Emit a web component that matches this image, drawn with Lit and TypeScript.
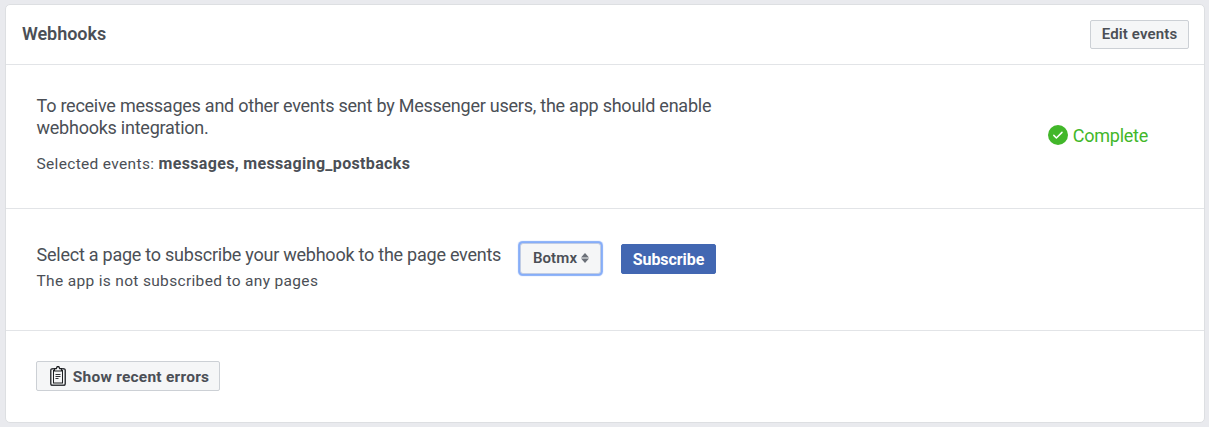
import { LitElement, html, css } from "lit";
import { customElement } from "lit/decorators.js";

@customElement("app-root")
export class AppRoot extends LitElement {
  static styles = css`
    :host { display: block; box-sizing: border-box; height: 427px; padding: 4px 4px 4px 5px; background: #e9eaee; overflow: hidden;
      font-family: Roboto, "Liberation Sans", sans-serif; color: #4b4f56; }
    * { box-sizing: border-box; }
    .card { height: 419px; background: #fff; border: 1px solid #dddfe2; border-radius: 5px; display: flex; flex-direction: column; }
    .head { height: 60px; border-bottom: 1px solid #e2e4e7; display: flex; justify-content: space-between; padding: 15px 15px 0 16px; }
    h2 { margin: 0; font-size: 18px; line-height: 28px; font-weight: 600; letter-spacing: -0.05px; }
    button { font-family: inherit; font-weight: 600; font-size: 15px; color: #4b4f56; background: #f5f6f7; border: 1px solid #ccd0d5; border-radius: 2px; padding: 0; display: flex; align-items: center; justify-content: center; white-space: nowrap; }
    .edit { width: 99px; height: 29px; padding-bottom: 2px; letter-spacing: 0.15px; }
    .section { border-bottom: 1px solid #e2e4e7; padding: 0 31px 0 30px; display: flex; }
    .intro { height: 144px; padding-top: 30px; justify-content: space-between; }
    p { margin: 0; padding-left: 0.5px; white-space: nowrap; }
    .lead { font-size: 18px; line-height: 22px; letter-spacing: -0.24px; }
    .small { font-size: 15.5px; line-height: 20px; letter-spacing: 0.33px; }
    .events { margin-top: 15px; }
    b { font-weight: 700; font-size: 16px; letter-spacing: 0.34px; }
    .status { display: flex; align-items: center; height: 22px; margin: 29px 25px 0 0; color: #42b72a; font-size: 18px; letter-spacing: -0.25px; gap: 5px; }
    svg { display: block; flex: none; }
    .subscribe { height: 122px; padding-top: 33px; }
    .pages { padding-top: 2px; width: 484px; }
    .note { margin-top: 5px; }
    .select { width: 81px; height: 31px; margin-top: 1px; padding: 0 0 2px 1px; gap: 4px; letter-spacing: 0.1px; border-color: #c0cce4; border-radius: 3px; box-shadow: 0 0 0 1px #86adf8, 0 0 1px 1.5px #86adf8; }
    .primary { width: 95px; height: 30px; margin: 2px 0 0 20px; background: #4267b2; border-color: #4267b2; color: #fff; font-size: 16px; font-weight: 700; letter-spacing: -0.05px; }
    .foot { border: 0; padding-top: 30px; }
    .errors { width: 184px; height: 30px; padding: 1px 0 0 3px; gap: 7px; font-size: 15.5px; font-weight: 700; letter-spacing: 0.24px; }
    .errors svg { margin-top: -1px; }
  `;

  render() {
    return html`
      <div class="card">
        <div class="head"><h2>Webhooks</h2><button class="edit"><span>Edit events</span></button></div>
        <div class="section intro">
          <div>
            <p class="lead">To receive messages and other events sent by Messenger users, the app should enable<br />webhooks integration.</p>
            <p class="small events">Selected events: <b>messages, messaging_postbacks</b></p>
          </div>
          <div class="status">
            <svg width="20" height="20" viewBox="0 0 20 20"><circle cx="10" cy="10" r="10" fill="#42b72a" /><path d="M5.8 10.4l2.6 2.6 5.6-5.6" fill="none" stroke="#fff" stroke-width="1.5" stroke-linecap="round" stroke-linejoin="round" /></svg>
            <span>Complete</span>
          </div>
        </div>
        <div class="section subscribe">
          <div class="pages">
            <p class="lead">Select a page to subscribe your webhook to the page events</p>
            <p class="small note">The app is not subscribed to any pages</p>
          </div>
          <button class="select"><span>Botmx</span>
            <svg width="8" height="10" viewBox="0 0 8 10"><path d="M4 0L8 4.4H0zM4 10L0 5.6H8z" fill="#6b7078" /></svg></button>
          <button class="primary"><span>Subscribe</span></button>
        </div>
        <div class="section foot">
          <button class="errors">
            <svg width="16" height="20" viewBox="0 0 16 20" fill="none" stroke="#1c1e21"><rect x=".75" y="2.75" width="14.5" height="16.5" rx="1.8" stroke="#3a3c40" stroke-width="1.5" /><rect x="3.5" y="4.5" width="9" height="12.5" /><path d="M4.5 5V2.6h1.8L7.2.7h1.6l.9 1.9h1.8V5z" fill="#f5f6f7" stroke-width="1.2" /><path d="M5.5 8.5h5M5.5 10.5h5M5.5 12.5h3" stroke-width=".9" /></svg>
            <span>Show recent errors</span>
          </button>
        </div>
      </div>`;
  }
}
